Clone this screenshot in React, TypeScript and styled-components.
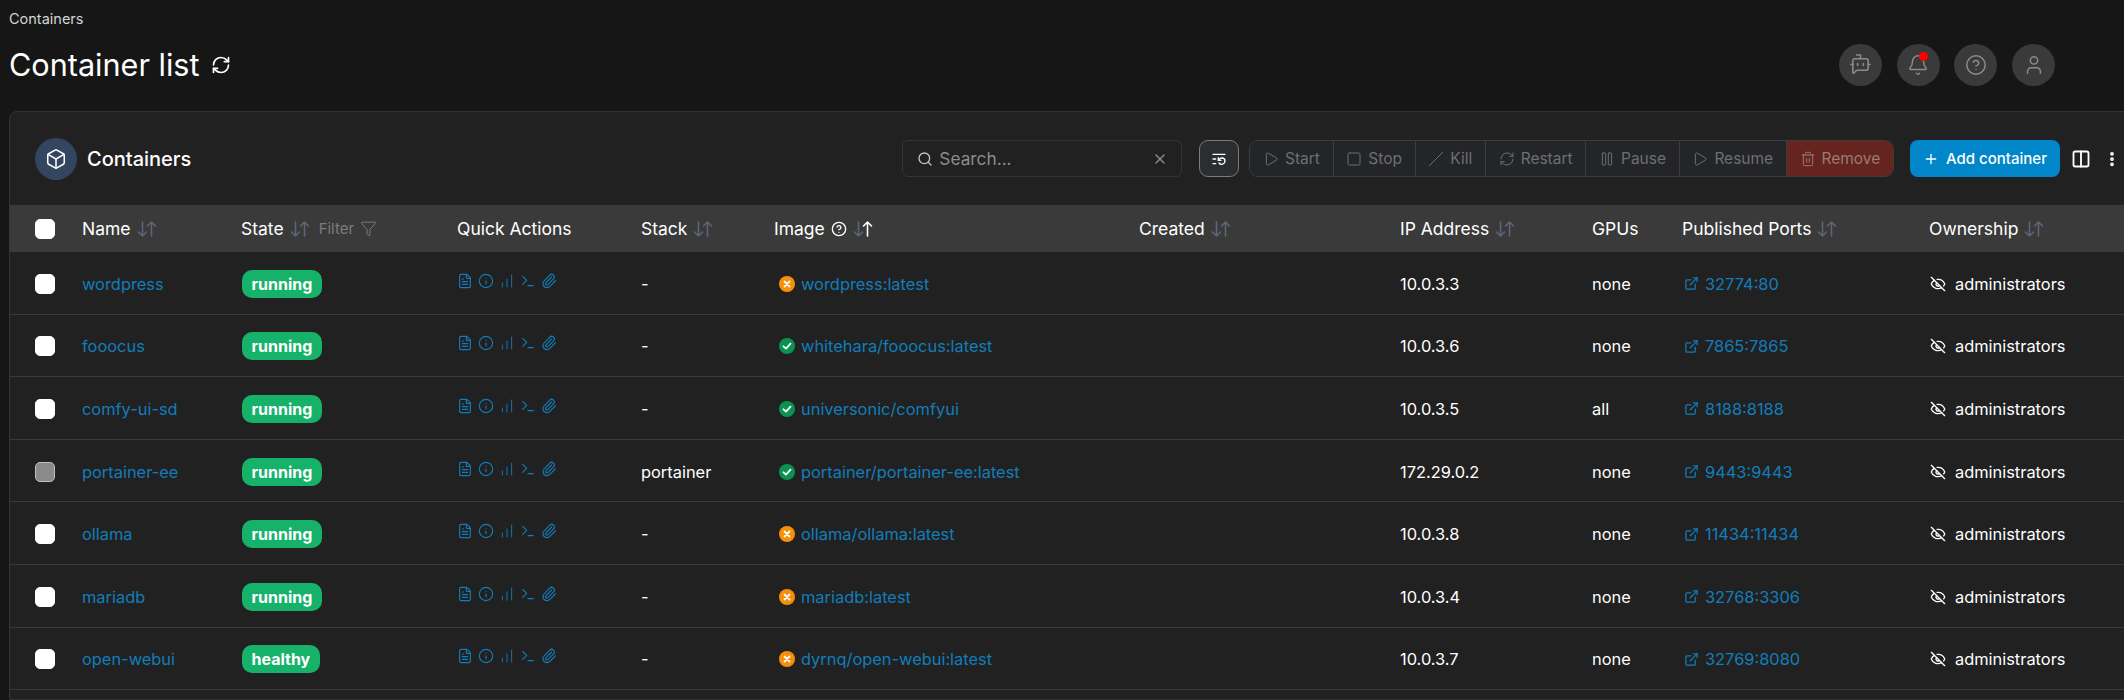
import React from 'react';
import styled, { createGlobalStyle } from 'styled-components';
import {
  BotMessageSquare,
  Bell,
  CircleHelp,
  User,
  RefreshCw,
  Box,
  Search,
  X,
  ListRestart,
  Play,
  Square,
  Slash,
  Pause,
  Trash2,
  Plus,
  Columns2,
  EllipsisVertical,
  Filter,
  FileText,
  Info,
  ChartNoAxesColumnIncreasing,
  Terminal,
  Paperclip,
  ExternalLink,
  EyeOff,
} from 'lucide-react';

const LINK = '#127dba';
const COLUMNS = '72px 159px 216px 184px 133px 365px 261px 192px 90px 247px 1fr';

const GlobalStyle = createGlobalStyle`
  html, body {
    margin: 0;
    height: 100%;
    background: #161616;
    overflow: hidden;
  }
  body {
    font-family: Inter, "Liberation Sans", sans-serif;
    color: #fff;
  }
  * { box-sizing: border-box; }
`;

const Page = styled.div`
  height: 700px;
  display: flex;
  flex-direction: column;
  overflow: hidden;
`;

const Breadcrumb = styled.div`
  padding: 10px 9px 0;
  font-size: 14.5px;
  line-height: 18px;
  color: #d4d4d4;
`;

const TitleBar = styled.div`
  display: flex;
  align-items: center;
  justify-content: space-between;
  height: 43px;
  margin-top: 15px;
  padding: 0 69px 0 9px;
`;

const Title = styled.h1`
  display: flex;
  align-items: center;
  gap: 11px;
  margin: 0;
  font-size: 30.6px;
  font-weight: 400;
`;

const TopActions = styled.div`
  display: flex;
  gap: 14.67px;
`;

const RoundButton = styled.div`
  position: relative;
  width: 43px;
  height: 42px;
  border-radius: 50%;
  background: #3a3a3a;
  color: #8c8c8c;
  display: flex;
  align-items: center;
  justify-content: center;
`;

const RedDot = styled.span`
  position: absolute;
  top: 8px;
  right: 12px;
  width: 9px;
  height: 9px;
  border-radius: 50%;
  background: #f00;
`;

const Card = styled.section`
  flex: 1;
  margin: 25px -8px 0 9px;
  background: #212121;
  border: 1px solid #333;
  border-radius: 8px 8px 0 0;
`;

const CardHeader = styled.div`
  display: flex;
  align-items: center;
  height: 93px;
  padding: 0 10px 0 25px;
`;

const CardIcon = styled.div`
  width: 42px;
  height: 42px;
  border-radius: 50%;
  background: #344560;
  display: flex;
  align-items: center;
  justify-content: center;
`;

const CardTitle = styled.div`
  margin-left: 10px;
  font-size: 20px;
  font-weight: 500;
`;

const Toolbar = styled.div`
  margin-left: auto;
  display: flex;
  align-items: center;
`;

const SearchBox = styled.div`
  width: 280px;
  height: 37px;
  display: flex;
  align-items: center;
  padding: 0 13px 0 14px;
  gap: 6px;
  border: 1px solid #353535;
  border-radius: 6px;
  color: #c4c4c4;
  font-size: 17.3px;
`;

const SearchText = styled.span`
  flex: 1;
  color: #8c8c8c;
`;

const SettingsButton = styled.div`
  width: 40px;
  height: 37px;
  margin-left: 17px;
  display: flex;
  align-items: center;
  justify-content: center;
  border: 1px solid #7a7a7a;
  border-radius: 9px;
  background: #2b2d31;
`;

const ActionGroup = styled.div`
  display: flex;
  height: 37px;
  margin-left: 10px;
  border: 1px solid #3d3d3d;
  border-radius: 9px;
  overflow: hidden;
`;

const ActionButton = styled.div<{ $danger?: boolean }>`
  display: flex;
  align-items: center;
  gap: 6px;
  padding: 0 12.7px;
  font-size: 15.5px;
  color: ${props => (props.$danger ? '#9a7a76' : '#6f6f6f')};
  background: ${props => (props.$danger ? '#65241d' : '#242528')};
  & + & {
    border-left: 1px solid #3d3d3d;
  }
`;

const AddButton = styled.div`
  height: 37px;
  width: 150px;
  margin-left: 16px;
  display: flex;
  align-items: center;
  justify-content: center;
  gap: 7px;
  border-radius: 8px;
  background: #0086c9;
  font-size: 15px;
  font-weight: 500;
`;

const ToolIcons = styled.div`
  display: flex;
  align-items: center;
  margin-left: 11px;
  gap: 12px;
`;

const HeadRow = styled.div`
  display: grid;
  grid-template-columns: ${COLUMNS};
  align-items: center;
  height: 47px;
  background: #3a3a3a;
  font-size: 17.5px;
`;

const Row = styled.div`
  display: grid;
  grid-template-columns: ${COLUMNS};
  align-items: center;
  height: 62.6px;
  padding-top: 2px;
  border-bottom: 1px solid #3a3a3a;
  font-size: 16.4px;
`;

const Check = styled.span<{ $disabled?: boolean }>`
  justify-self: start;
  margin-left: 25px;
  width: 20px;
  height: 20px;
  border-radius: 5px;
  background: ${props => (props.$disabled ? '#8a8a8a' : '#fff')};
  border: 1px solid ${props => (props.$disabled ? '#c0c0c0' : '#fff')};
`;

const HeadCell = styled.div`
  display: flex;
  align-items: center;
  gap: 6px;
`;

const FilterLabel = styled.span`
  display: flex;
  align-items: center;
  gap: 6px;
  margin-left: 3px;
  color: #7b7b7b;
  font-size: 15px;
`;

const Link = styled.span`
  color: ${LINK};
`;

const Badge = styled.span`
  justify-self: start;
  display: inline-flex;
  align-items: center;
  height: 28px;
  margin-left: 1px;
  padding: 0 9.5px;
  border-radius: 10px;
  background: #17b26a;
  font-size: 16px;
  font-weight: 700;
`;

const QuickActions = styled.div`
  display: flex;
  align-items: center;
  gap: 5px;
  color: ${LINK};
  margin-top: -6px;
`;

const ImageCell = styled.div`
  display: flex;
  align-items: center;
  gap: 6px;
  padding-left: 5px;
`;

const IconText = styled.div`
  display: flex;
  align-items: center;
  gap: 6px;
  padding-left: 2px;
`;

const OwnerCell = styled.div`
  display: flex;
  align-items: center;
  gap: 9px;
  padding-left: 1px;
`;

function SortIcon({ active }: { active?: boolean }) {
  return (
    <svg width="20" height="18" viewBox="0 0 20 18" fill="none" strokeWidth="1.6" strokeLinecap="round" strokeLinejoin="round">
      <path d="M5.5 2v14M1.5 12l4 4 4-4" stroke="#5d6579" />
      <path d="M14.5 16V2M10.5 6l4-4 4 4" stroke={active ? '#fff' : '#5d6579'} />
    </svg>
  );
}

function StatusIcon({ ok }: { ok: boolean }) {
  return (
    <svg width="16" height="16" viewBox="0 0 16 16" fill="none">
      <circle cx="8" cy="8" r="8" fill={ok ? '#099250' : '#f79009'} />
      {ok ? (
        <path d="M4.5 8.3 7 10.6l4.5-5" stroke="#fff" strokeWidth="1.8" strokeLinecap="round" strokeLinejoin="round" />
      ) : (
        <path d="M5.5 5.5l5 5M10.5 5.5l-5 5" stroke="#fff" strokeWidth="1.8" strokeLinecap="round" />
      )}
    </svg>
  );
}

const containers = [
  { name: 'wordpress', state: 'running', stack: '-', image: 'wordpress:latest', ok: false, ip: '10.0.3.3', gpus: 'none', port: '32774:80' },
  { name: 'fooocus', state: 'running', stack: '-', image: 'whitehara/fooocus:latest', ok: true, ip: '10.0.3.6', gpus: 'none', port: '7865:7865' },
  { name: 'comfy-ui-sd', state: 'running', stack: '-', image: 'universonic/comfyui', ok: true, ip: '10.0.3.5', gpus: 'all', port: '8188:8188' },
  { name: 'portainer-ee', state: 'running', stack: 'portainer', image: 'portainer/portainer-ee:latest', ok: true, ip: '172.29.0.2', gpus: 'none', port: '9443:9443', disabled: true },
  { name: 'ollama', state: 'running', stack: '-', image: 'ollama/ollama:latest', ok: false, ip: '10.0.3.8', gpus: 'none', port: '11434:11434' },
  { name: 'mariadb', state: 'running', stack: '-', image: 'mariadb:latest', ok: false, ip: '10.0.3.4', gpus: 'none', port: '32768:3306' },
  { name: 'open-webui', state: 'healthy', stack: '-', image: 'dyrnq/open-webui:latest', ok: false, ip: '10.0.3.7', gpus: 'none', port: '32769:8080' },
];

const actions = [
  { label: 'Start', icon: Play },
  { label: 'Stop', icon: Square },
  { label: 'Kill', icon: Slash },
  { label: 'Restart', icon: RefreshCw },
  { label: 'Pause', icon: Pause },
  { label: 'Resume', icon: Play },
];

export default function App() {
  return (
    <Page>
      <GlobalStyle />
      <Breadcrumb>Containers</Breadcrumb>
      <TitleBar>
        <Title>
          Container list <RefreshCw size={20} />
        </Title>
        <TopActions>
          <RoundButton><BotMessageSquare size={23} strokeWidth={1.6} /></RoundButton>
          <RoundButton>
            <Bell size={22} strokeWidth={1.6} />
            <RedDot />
          </RoundButton>
          <RoundButton><CircleHelp size={22} strokeWidth={1.6} /></RoundButton>
          <RoundButton><User size={22} strokeWidth={1.6} /></RoundButton>
        </TopActions>
      </TitleBar>

      <Card>
        <CardHeader>
          <CardIcon><Box size={22} strokeWidth={1.7} /></CardIcon>
          <CardTitle>Containers</CardTitle>
          <Toolbar>
            <SearchBox>
              <Search size={16} />
              <SearchText>Search...</SearchText>
              <X size={16} color="#8c8c8c" />
            </SearchBox>
            <SettingsButton><ListRestart size={16} /></SettingsButton>
            <ActionGroup>
              {actions.map(({ label, icon: Icon }) => (
                <ActionButton key={label}>
                  <Icon size={16} strokeWidth={1.5} />
                  {label}
                </ActionButton>
              ))}
              <ActionButton $danger>
                <Trash2 size={16} strokeWidth={1.5} />
                Remove
              </ActionButton>
            </ActionGroup>
            <AddButton><Plus size={16} />Add container</AddButton>
            <ToolIcons>
              <Columns2 size={20} strokeWidth={2.2} />
              <EllipsisVertical size={18} strokeWidth={3} />
            </ToolIcons>
          </Toolbar>
        </CardHeader>

        <HeadRow>
          <Check />
          <HeadCell>Name <SortIcon /></HeadCell>
          <HeadCell>
            State <SortIcon />
            <FilterLabel>Filter <Filter size={17} strokeWidth={1.4} /></FilterLabel>
          </HeadCell>
          <HeadCell>Quick Actions</HeadCell>
          <HeadCell>Stack <SortIcon /></HeadCell>
          <HeadCell>Image <CircleHelp size={16} /> <SortIcon active /></HeadCell>
          <HeadCell>Created <SortIcon /></HeadCell>
          <HeadCell>IP Address <SortIcon /></HeadCell>
          <HeadCell>GPUs</HeadCell>
          <HeadCell>Published Ports <SortIcon /></HeadCell>
          <HeadCell>Ownership <SortIcon /></HeadCell>
        </HeadRow>

        {containers.map(c => (
          <Row key={c.name}>
            <Check $disabled={c.disabled} />
            <Link>{c.name}</Link>
            <Badge>{c.state}</Badge>
            <QuickActions>
              <FileText size={16} strokeWidth={1.7} />
              <Info size={16} strokeWidth={1.7} />
              <ChartNoAxesColumnIncreasing size={16} strokeWidth={1.4} />
              <Terminal size={16} strokeWidth={1.7} />
              <Paperclip size={16} strokeWidth={1.7} />
            </QuickActions>
            <span>{c.stack}</span>
            <ImageCell>
              <StatusIcon ok={c.ok} />
              <Link>{c.image}</Link>
            </ImageCell>
            <span />
            <span>{c.ip}</span>
            <span>{c.gpus}</span>
            <IconText>
              <ExternalLink size={15} color={LINK} />
              <Link>{c.port}</Link>
            </IconText>
            <OwnerCell>
              <EyeOff size={16} />
              administrators
            </OwnerCell>
          </Row>
        ))}
      </Card>
    </Page>
  );
}
